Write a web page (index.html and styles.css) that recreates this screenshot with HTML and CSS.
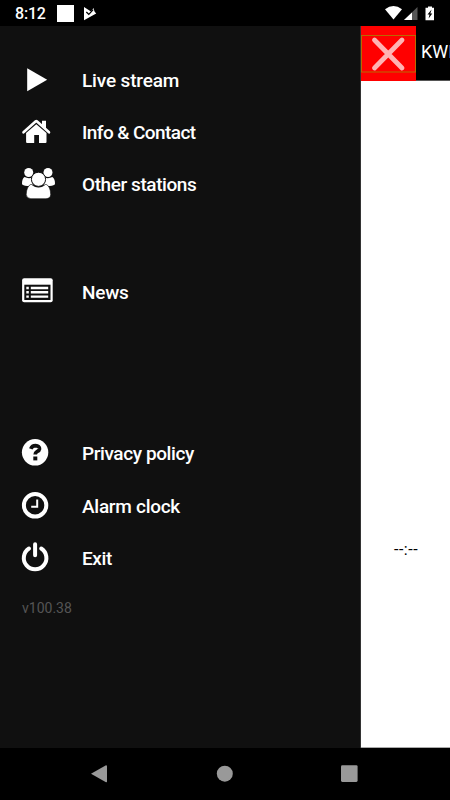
FILE: index.html
```html
<!DOCTYPE html>
<html lang="en">
<head>
<meta charset="utf-8">
<title>Radio menu</title>
<link rel="stylesheet" href="styles.css">
</head>
<body>
<div class="phone">
  <header class="status">
    <span class="time">8:12</span>
    <span class="notice"></span>
    <svg class="play-check" width="14" height="14" viewBox="0 0 14 14"><path d="M1 0 4.500 2.200 8 4.500 10.500 1 11.500 4.500 13.200 6.500 1 13.200Z" fill="#fff"/><path d="M3.300 5 5.800 7.300 10.200 2.700" fill="none" stroke="#000" stroke-width="1.200"/></svg>
    <svg class="signals" width="52" height="16" viewBox="0 0 52 16"><path d="M0 3.2Q8.5-3 17 3.2L8.5 13.6Z" fill="#fff"/><path d="M32.5 1V14H19Z" fill="#555"/><path d="M27 6.4V14H19Z" fill="#fff"/><path d="M43 .5h4v1.3h2V14.300h-8.500V1.800H43Z" fill="#fff"/><path d="M46.600 3.500 42.500 8.500h2L43.600 12.600 47.300 7.500h-2Z" fill="#000"/></svg>
  </header>
  <main class="main">
    <nav class="drawer">
      <ul class="group">
        <li class="item"><svg class="icon" width="36" height="36" viewBox="0 0 36 36"><path d="M5.200 6.200 25.200 17.700 5.200 29.200Z" fill="#fff"/></svg><span class="label live">Live stream</span></li>
        <li class="item"><svg class="icon" width="36" height="36" viewBox="0 0 36 36" fill="#fff"><path d="M1.500 18.300 13.800 7.300Q14.300 6.900 14.800 7.300L27 18.300" fill="none" stroke="#fff" stroke-width="2.600" stroke-linecap="round" stroke-linejoin="round"/><path d="M20 6.700h4v8.500l-4-3.500ZM4.100 19 14.300 10.300 24.500 19V28.100q0 1-1 1H17V21h-4.800v8.100H5.100q-1 0-1-1Z"/></svg><span class="label info">Info &amp; Contact</span></li>
        <li class="item"><svg class="icon" width="36" height="36" viewBox="0 0 36 36" fill="#fff"><circle cx="6.700" cy="6.500" r="4.500"/><circle cx="26" cy="6.500" r="4.500"/><path d="M2.500 11Q7 13.200 10.600 11.200V19Q5 20.800 1 19 0 18.800 0 17.500 0 12.500 2.500 11ZM30.300 11Q26 13.200 22.200 11.200V19Q28 20.800 32 19 33 18.800 33 17.500 33 12.500 30.300 11Z"/><path d="M9 18.200Q16.500 24.200 24 18.200 28.500 20.500 28.700 28.500 28.500 32.500 24 32.700H8.800Q4.500 32.500 4.200 28.500 4.500 20.500 9 18.200Z" stroke="#101010" stroke-width=".6"/><circle cx="16.500" cy="13.300" r="7.100" stroke="#101010" stroke-width="1"/></svg><span class="label other">Other stations</span></li>
      </ul>
      <ul class="group news-group">
        <li class="item"><svg class="icon" width="36" height="36" viewBox="0 0 36 36"><rect x=".1" y="4.200" width="30.600" height="24" rx="2" fill="#fff"/><path d="M2.300 10.700h26.200v15.300H2.300Z" fill="#101010"/><path d="M4.300 14h2.500M8.800 14h17.400M4.300 18.300h2.500M8.800 18.300h17.400M4.300 22.600h2.500M8.800 22.600h17.400" stroke="#fff" stroke-width="2.400"/></svg><span class="label news">News</span></li>
      </ul>
      <ul class="group tools-group">
        <li class="item"><svg class="icon" width="36" height="36" viewBox="0 0 36 36"><circle cx="13.100" cy="17.300" r="13.200" fill="#fff"/><path d="M8.800 13.800Q10 10.700 13.600 10.700 17.700 10.900 17.500 13.900 17.300 15.500 15 16.600 13.200 17.600 13.200 19.600" fill="none" stroke="#101010" stroke-width="3.700"/><path d="M11.300 21.500h4v3.900h-4Z" fill="#101010"/></svg><span class="label privacy">Privacy policy</span></li>
        <li class="item"><svg class="icon" width="36" height="36" viewBox="0 0 36 36" fill="none" stroke="#fff"><circle cx="13.100" cy="17.300" r="11.200" stroke-width="4"/><path d="M15.200 11.500V18.800H9.200" stroke-width="2"/></svg><span class="label alarm">Alarm clock</span></li>
        <li class="item"><svg class="icon" width="36" height="36" viewBox="0 0 36 36" fill="none" stroke="#fff" stroke-width="4" stroke-linecap="round"><path d="M7 8.500A11.300 11.300 0 1 0 19.200 8.500M13.100 4.300V15.300"/></svg><span class="label exit">Exit</span></li>
      </ul>
      <p class="version">v100.38</p>
    </nav>
    <section class="player">
      <div class="topbar">
        <div class="close"><svg class="cross" width="55" height="38" viewBox="0 0 55 38"><rect x=".5" y=".5" width="54" height="36.500" fill="none" stroke="#b86a00"/><path d="M13.500 5 41 33M41 5 13.500 33" stroke="#ffb3b3" stroke-width="4.800" stroke-linecap="round"/></svg></div>
        <span class="title">KWIN</span>
      </div>
      <div class="clock">--:--</div>
    </section>
  </main>
  <footer class="navbar">
    <svg width="450" height="52" viewBox="0 0 450 52" fill="#999"><path d="M91 25.700 106 17.200q1 0 1 1V33.500q0 1-1 .7Z"/><circle cx="224.800" cy="25.700" r="8"/><rect x="341" y="17.300" width="16.600" height="16.600" rx="1.300"/></svg>
  </footer>
</div>
</body>
</html>
```
FILE: styles.css
```css
* { box-sizing: border-box; }
body { margin: 0; background: #000; font-family: Roboto, sans-serif; }
svg { display: block; flex: none; overflow: visible; }
.phone { width: 450px; height: 800px; display: flex; flex-direction: column; overflow: hidden; }
.status { height: 26px; display: flex; padding: 5px 15px 0 15px; color: #fff; }
.time { width: 42px; font-size: 16px; line-height: 18px; font-weight: 500; letter-spacing: -.2px; white-space: nowrap; }
.notice { width: 17px; height: 17px; background: #fff; }
.play-check { margin: 2px 0 0 9px; }
.signals { margin: 1px 0 0 auto; width: 52px; position: relative; left: 2px; }
.main { height: 722px; display: flex; }
.drawer { width: 361px; flex: none; background: #101010; padding-top: 28px; border-right: 1px solid #333; }
.group { list-style: none; margin: 0; padding: 0; }
.news-group { margin-top: 55px; }
.tools-group { margin-top: 109.500px; }
.item { height: 52.200px; display: flex; align-items: center; padding-left: 22px; }
.label { margin-left: 24px; padding-top: 2px; color: #fff; font-size: 19px; line-height: 24px; font-weight: 500; white-space: nowrap; }
.live { letter-spacing: -.16px; }
.info { letter-spacing: -.58px; }
.other { letter-spacing: -.42px; }
.news { letter-spacing: -.25px; }
.privacy { letter-spacing: -.41px; }
.alarm { letter-spacing: -.28px; }
.exit { letter-spacing: -.4px; }
.version { margin: 14px 0 0 22px; color: #555; font-size: 14px; line-height: 20px; }
.player { flex: 1; background: #fff; overflow: hidden; border-bottom: 1px solid #aaa; }
.topbar { height: 55px; display: flex; background: #000; border-bottom: 1px solid #555; }
.close { width: 55px; height: 55px; flex: none; background: #f00; padding-top: 9px; }
.title { margin-left: 5px; color: #fff; font-size: 18px; line-height: 52px; }
.clock { margin: 459px 0 0 33px; font-size: 16px; line-height: 20px; letter-spacing: .5px; color: #000; }
.navbar { height: 52px; background: #000; }
```
